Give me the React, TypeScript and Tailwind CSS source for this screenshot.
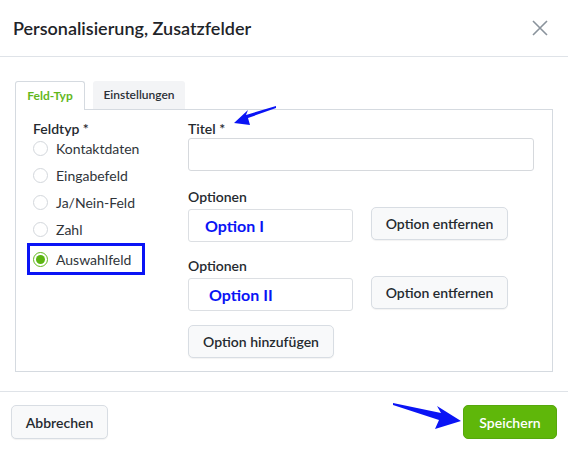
const radios = ['Kontaktdaten', 'Eingabefeld', 'Ja/Nein-Feld', 'Zahl', 'Auswahlfeld']

function Arrow({ className, points, w, h }: { className: string; points: string; w: number; h: number }) {
  return (
    <svg className={className} viewBox={`0 0 ${w} ${h}`} fill="#0a14f5">
      <polygon points={points} />
    </svg>
  )
}

function OptionRow({ value, indent, top }: { value: string; indent: string; top: string }) {
  return (
    <div className={top}>
      <div className="text-[14px] font-semibold leading-[18px] text-[#252a2f]">Optionen</div>
      <div className="mt-[3px] flex items-start">
        <div className={`h-[33px] w-[165px] rounded-[3px] border border-[#dcdfe3] ${indent} flex items-center text-[16px] font-bold text-[#0a14f5]`}>
          {value}
        </div>
        <button className="ml-[18px] -mt-[2px] h-[33px] w-[137px] rounded-[5px] border border-[#d8dde3] bg-[#f8f9fa] text-[14px] font-semibold text-[#252a2f] shadow-[0_1px_1px_rgba(0,0,0,0.05)]">
          Option entfernen
        </button>
      </div>
    </div>
  )
}

export default function App() {
  return (
    <div className="relative h-[451px] w-[568px] overflow-hidden bg-white font-['Lato',sans-serif] text-[#252a2f]">
      <div className="flex h-[57px] items-center justify-between border-b border-[#dfe3e8] pl-[13px] pr-[20px]">
        <h1 className="text-[18px] font-semibold leading-none text-[#1f2429]">Personalisierung, Zusatzfelder</h1>
        <svg width="16" height="16" viewBox="0 0 16 16" stroke="#8a939c" strokeWidth="1.6" fill="none">
          <path d="M1 1 L15 15 M15 1 L1 15" />
        </svg>
      </div>

      <div className="px-[15px] pt-[24px]">
        <div className="flex">
          <div className="relative z-10 -mb-px flex h-[29px] w-[70px] items-center justify-center rounded-t-[3px] border border-b-0 border-[#d5dae0] bg-white text-[12px] font-bold text-[#62b71c]">
            Feld-Typ
          </div>
          <div className="ml-[8px] flex h-[28px] w-[92px] items-center justify-center rounded-t-[3px] bg-[#f3f4f6] text-[12px] font-semibold text-[#2b3036]">
            Einstellungen
          </div>
        </div>
        <div className="flex h-[263px] w-[538px] border border-[#d5dae0] pl-[17px] pt-[10px]">
          <div className="w-[155px]">
            <div className="text-[14px] font-semibold leading-[18px] text-[#252a2f]">Feldtyp *</div>
            <div className="-mt-[3px] flex flex-col">
              {radios.map((r, i) => {
                const active = i === radios.length - 1
                return (
                  <div
                    key={r}
                    className={`flex h-[27px] items-center ${active ? '-ml-[6px] h-[32px] w-[118px] border-[3px] border-[#0a14f5] pl-[3px]' : ''}`}
                  >
                    <span
                      className={`flex h-[15px] w-[15px] items-center justify-center rounded-full border ${active ? 'border-[#62b71c]' : 'border-[#d3d7dc]'} bg-white`}
                    >
                      {active && <span className="h-[9px] w-[9px] rounded-full bg-[#5cb512]" />}
                    </span>
                    <span className="ml-[8px] text-[14px] text-[#30353a]">{r}</span>
                  </div>
                )
              })}
            </div>
          </div>
          <div className="flex-1">
            <div className="text-[14px] font-semibold leading-[18px] text-[#252a2f]">Titel *</div>
            <div className="h-[33px] w-[346px] rounded-[3px] border border-[#d6d9dd]" />
            <OptionRow value="Option I" indent="pl-[16px]" top="mt-[17px]" />
            <OptionRow value="Option II" indent="pl-[20px]" top="mt-[15px]" />
            <button className="mt-[14px] h-[33px] w-[146px] rounded-[5px] border border-[#d8dde3] bg-[#f8f9fa] text-[14px] font-semibold text-[#252a2f] shadow-[0_1px_1px_rgba(0,0,0,0.05)]">
              Option hinzufügen
            </button>
          </div>
        </div>
      </div>

      <div className="mt-[19px] flex items-center justify-between border-t border-[#dfe3e8] px-[11px] pt-[13px]">
        <button className="h-[34px] w-[97px] rounded-[5px] border border-[#d8dde3] bg-[#f8f9fa] text-[14px] font-semibold text-[#252a2f] shadow-[0_1px_1px_rgba(0,0,0,0.05)]">
          Abbrechen
        </button>
        <button className="h-[34px] w-[94px] rounded-[5px] border border-[#56a80c] bg-[#5fb70a] text-[14px] font-semibold text-white">
          Speichern
        </button>
      </div>

      <Arrow className="absolute left-[234px] top-[106px] h-[20px] w-[42px]" w={42} h={20} points="0,17 14,4 12,9 42,0 42,2 14,12 16,19" />
      <Arrow className="absolute left-[393px] top-[403px] h-[26px] w-[68px]" w={68} h={26} points="0,2 0,0 48,10 44,3 68,18 42,26 46,17" />
    </div>
  )
}
